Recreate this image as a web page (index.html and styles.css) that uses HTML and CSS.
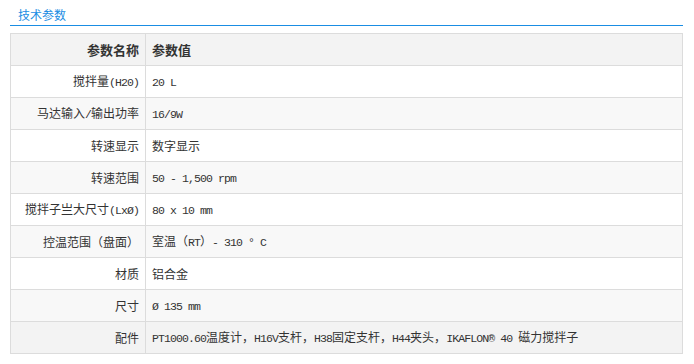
FILE: index.html
```html
<!DOCTYPE html>
<html lang="zh-CN">
<head>
<meta charset="utf-8">
<title>技术参数</title>
<link rel="stylesheet" href="styles.css">
</head>
<body>
<div class="wrap">
  <div class="tab-head"><span class="tab-title">技术参数</span></div>
  <table class="spec">
    <colgroup><col class="c1"><col class="c2"></colgroup>
    <thead>
      <tr><th class="k">参数名称</th><th class="v">参数值</th></tr>
    </thead>
    <tbody>
      <tr><td class="k">搅拌量<span class="m">(H20)</span></td><td class="v"><span class="m">20 L</span></td></tr>
      <tr class="alt"><td class="k">马达输入<span class="m">/</span>输出功率</td><td class="v"><span class="m">16/9W</span></td></tr>
      <tr><td class="k">转速显示</td><td class="v">数字显示</td></tr>
      <tr class="alt"><td class="k">转速范围</td><td class="v"><span class="m">50 - 1,500 rpm</span></td></tr>
      <tr><td class="k">搅拌子亗大尺寸<span class="m">(LxØ)</span></td><td class="v"><span class="m">80 x 10 mm</span></td></tr>
      <tr class="alt"><td class="k">控温范围（盘面）</td><td class="v">室温（<span class="m">RT</span>）<span class="m">- 310 ° C</span></td></tr>
      <tr><td class="k">材质</td><td class="v">铝合金</td></tr>
      <tr class="alt"><td class="k">尺寸</td><td class="v"><span class="m">Ø 135 mm</span></td></tr>
      <tr class="hl"><td class="k">配件</td><td class="v"><span class="m">PT1000.60</span>温度计，<span class="m">H16V</span>支杆，<span class="m">H38</span>固定支杆，<span class="m">H44</span>夹头，<span class="m">IKAFLON® 40 </span>磁力搅拌子</td></tr>
    </tbody>
  </table>
</div>
</body>
</html>
```

FILE: styles.css
```css
html, body {
  margin: 0;
  padding: 0;
  background: #fff;
}
body {
  font-family: "Noto Sans CJK SC", "Noto Sans", sans-serif;
  font-size: 12px;
  color: #333;
}
.wrap {
  width: 673px;
  padding-left: 10px;
}
.tab-head {
  box-sizing: border-box;
  height: 26px;
  border-bottom: 1px solid #1a8de3;
  padding: 6px 0 0 8px;
}
.tab-title {
  color: #1a8de3;
  font-size: 12px;
  line-height: 18px;
  display: block;
}
.spec {
  margin-top: 7px;
  width: 673px;
  border-collapse: collapse;
  border: 1px solid #dcdcdc;
  table-layout: fixed;
}
.c1 { width: 135px; }
.spec th, .spec td {
  border: 1px solid #dcdcdc;
  height: 32px;
  padding: 0 6px;
  box-sizing: border-box;
  white-space: nowrap;
  vertical-align: middle;
  line-height: 16px;
}
.spec th {
  background: #f3f3f3;
  font-size: 13px;
  font-weight: bold;
  color: #333;
}
.spec .k { text-align: right; }
.spec .v { text-align: left; }
.spec tr.alt td { background: #f8f8f8; }
.spec tr.hl td { background: #f3f3f3; }
.m {
  font-family: "Liberation Mono", "DejaVu Sans Mono", monospace;
  font-size: 11.5px;
  letter-spacing: -0.9px;
}
```
